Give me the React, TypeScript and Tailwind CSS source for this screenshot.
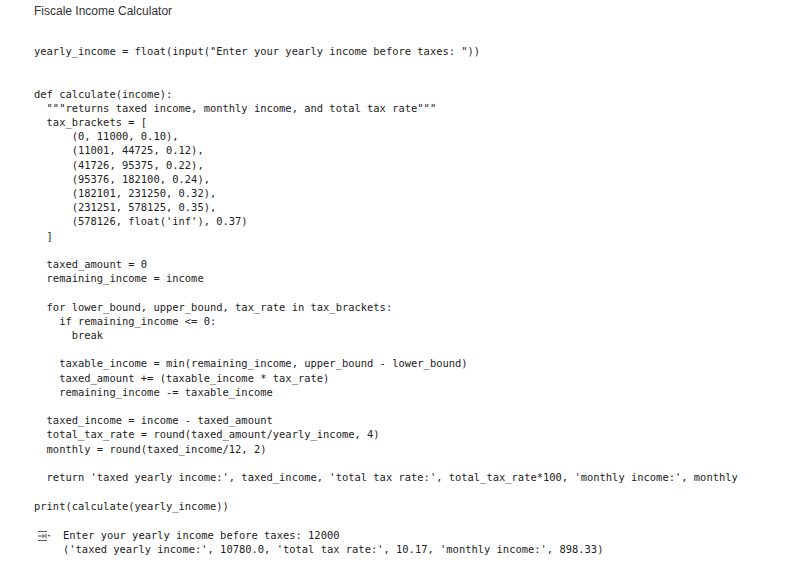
import React from 'react';

const code = `yearly_income = float(input("Enter your yearly income before taxes: "))


def calculate(income):
  """returns taxed income, monthly income, and total tax rate"""
  tax_brackets = [
      (0, 11000, 0.10),
      (11001, 44725, 0.12),
      (41726, 95375, 0.22),
      (95376, 182100, 0.24),
      (182101, 231250, 0.32),
      (231251, 578125, 0.35),
      (578126, float('inf'), 0.37)
  ]

  taxed_amount = 0
  remaining_income = income

  for lower_bound, upper_bound, tax_rate in tax_brackets:
    if remaining_income <= 0:
      break

    taxable_income = min(remaining_income, upper_bound - lower_bound)
    taxed_amount += (taxable_income * tax_rate)
    remaining_income -= taxable_income

  taxed_income = income - taxed_amount
  total_tax_rate = round(taxed_amount/yearly_income, 4)
  monthly = round(taxed_income/12, 2)

  return 'taxed yearly income:', taxed_income, 'total tax rate:', total_tax_rate*100, 'monthly income:', monthly

print(calculate(yearly_income))`;

const output = `Enter your yearly income before taxes: 12000
('taxed yearly income:', 10780.0, 'total tax rate:', 10.17, 'monthly income:', 898.33)`;

// Colab-style "output" toggle icon
const OutputIcon: React.FC = () => (
  <svg width="14" height="12" viewBox="0 0 14 12" fill="none" stroke="#555" strokeWidth="1">
    <path d="M1 1.5h9" />
    <path d="M1 6h6.5M5.5 4l2 2-2 2M9 3.5v5" />
    <path d="M1 10.5h9" />
    <path d="M10.5 5h3l-1.5 2z" fill="#555" stroke="none" />
  </svg>
);

const App: React.FC = () => {
  return (
    <div className="w-[803px] h-[573px] bg-white overflow-hidden">
      {/* Cell title */}
      <div className="pl-[34px] h-[22px] flex items-center font-['Liberation_Sans',Arial,sans-serif] text-[12px] text-[#333]">
        Fiscale Income Calculator
      </div>

      {/* Code cell */}
      <pre className="mt-[22px] pl-[34px] font-['DejaVu_Sans_Mono',monospace] text-[10.45px] leading-[14.2px] text-[#222] whitespace-pre">
        {code}
      </pre>

      {/* Output */}
      <div className="mt-[16px] flex items-start pl-[37px]">
        <div className="w-[26px] pt-[1px]">
          <OutputIcon />
        </div>
        <pre className="font-['DejaVu_Sans_Mono',monospace] text-[10.45px] leading-[13.8px] text-[#222] whitespace-pre">
          {output}
        </pre>
      </div>
    </div>
  );
};

export default App;
